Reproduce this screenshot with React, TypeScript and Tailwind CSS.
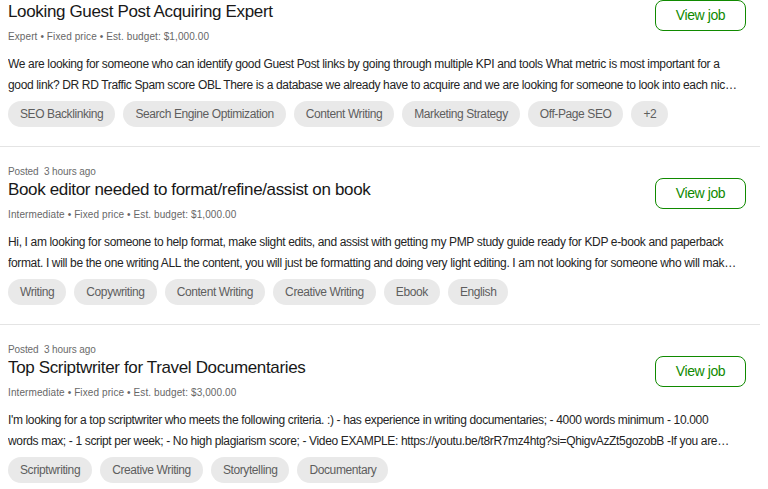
import React from 'react';

type Job = {
  posted?: string;
  title: string;
  level: string;
  budget: string;
  description: string;
  tags: string[];
};

const jobs: Job[] = [
  {
    posted: '3 hours ago',
    title: 'Looking Guest Post Acquiring Expert',
    level: 'Expert',
    budget: '$1,000.00',
    description:
      'We are looking for someone who can identify good Guest Post links by going through multiple KPI and tools What metric is most important for a good link? DR RD Traffic Spam score OBL There is a database we already have to acquire and we are looking for someone to look into each niche and find the best sites available for our clients.',
    tags: ['SEO Backlinking', 'Search Engine Optimization', 'Content Writing', 'Marketing Strategy', 'Off-Page SEO', '+2'],
  },
  {
    posted: '3 hours ago',
    title: 'Book editor needed to format/refine/assist on book',
    level: 'Intermediate',
    budget: '$1,000.00',
    description:
      'Hi, I am looking for someone to help format, make slight edits, and assist with getting my PMP study guide ready for KDP e-book and paperback format. I will be the one writing ALL the content, you will just be formatting and doing very light editing. I am not looking for someone who will make major changes.',
    tags: ['Writing', 'Copywriting', 'Content Writing', 'Creative Writing', 'Ebook', 'English'],
  },
  {
    posted: '3 hours ago',
    title: 'Top Scriptwriter for Travel Documentaries',
    level: 'Intermediate',
    budget: '$3,000.00',
    description:
      "I'm looking for a top scriptwriter who meets the following criteria. :) - has experience in writing documentaries; - 4000 words minimum - 10.000 words max; - 1 script per week; - No high plagiarism score; - Video EXAMPLE: https://youtu.be/t8rR7mz4htg?si=QhigvAzZt5gozobB -If you are busy please do not apply.",
    tags: ['Scriptwriting', 'Creative Writing', 'Storytelling', 'Documentary'],
  },
];

const JobCard = ({job, first}: {job: Job; first?: boolean}) => {
  return (
    <article
      className={
        'pl-[8px] pr-[14px] pt-[18px] pb-[19px] border-b border-[#e4e4e4] ' +
        (first ? '-mt-[31px]' : '')
      }
    >
      <div className="flex justify-between items-start h-[36px]">
        <div className="min-w-0">
          <div className="text-[10px] leading-[14px] text-[#6b6b6b] tracking-[-0.1px]">
            Posted&nbsp; {job.posted}
          </div>
          <h2 className="text-[17px] leading-[22px] text-[#181818] tracking-[-0.35px] font-normal">
            {job.title}
          </h2>
        </div>
        <button className="mt-[13px] h-[31px] w-[91px] shrink-0 rounded-[8px] border-[1.5px] border-[#108a00] text-[14px] font-medium text-[#108a00] tracking-[-0.4px]">
          View job
        </button>
      </div>
      <div className="mt-[7px] text-[10px] leading-[14px] text-[#676767] tracking-[0.1px]">
        {job.level} • Fixed price • Est. budget: {job.budget}
      </div>
      <p className="mt-[10px] w-[731px] text-[12px] leading-[21px] text-[#242424] tracking-[-0.35px] line-clamp-2">
        {job.description}
      </p>
      <div className="mt-[5px] flex gap-2">
        {job.tags.map((tag) => (
          <span
            key={tag}
            className="h-[26px] px-3 flex items-center rounded-full bg-[#e9e9e9] text-[12px] text-[#5e5e5e] tracking-[-0.4px] whitespace-nowrap"
          >
            {tag}
          </span>
        ))}
      </div>
    </article>
  );
};

const App = () => {
  return (
    <div
      className="w-[760px] h-[489px] overflow-hidden bg-white"
      style={{fontFamily: '"Liberation Sans", Arial, sans-serif'}}
    >
      {jobs.map((job, i) => (
        <JobCard key={job.title} job={job} first={i === 0} />
      ))}
    </div>
  );
};

export default App;
